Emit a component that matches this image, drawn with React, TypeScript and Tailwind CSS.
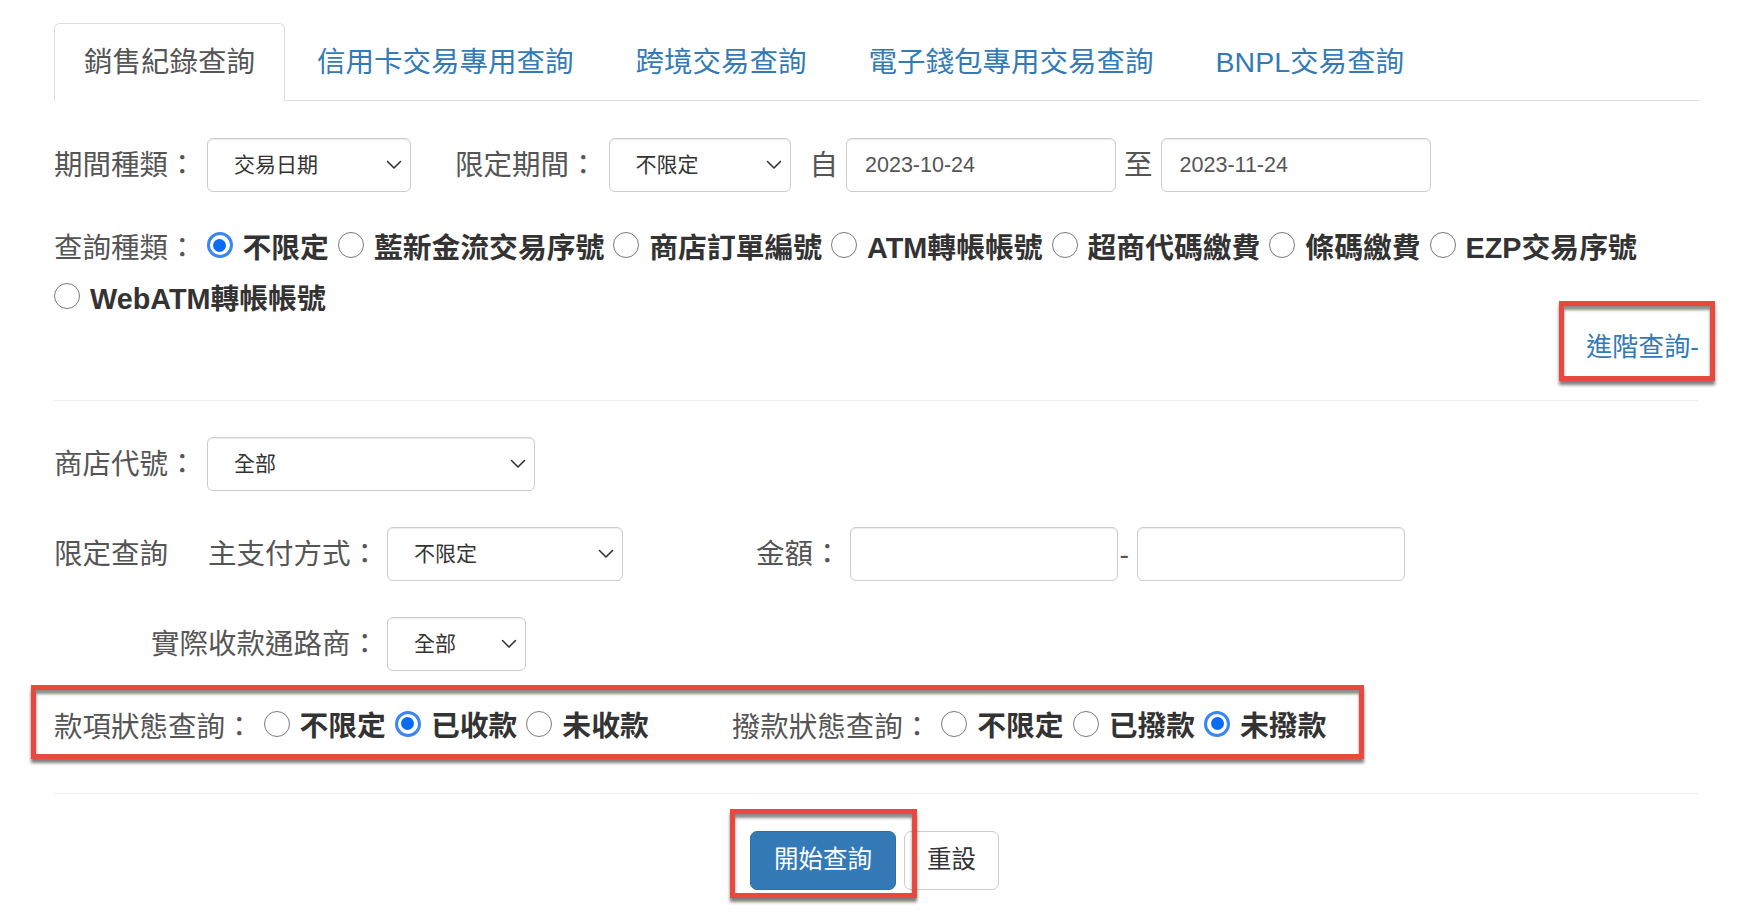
import React from "react";

const FONT = "font-['Liberation_Sans','Noto_Sans_CJK_TC',sans-serif]";

function Radio({ checked }: { checked?: boolean }) {
  if (checked) {
    return (
      <span className="mb-[7px] flex h-[26px] w-[26px] shrink-0 items-center justify-center rounded-full border-[3px] border-[#3b86f0] bg-white">
        <span className="h-[13px] w-[13px] rounded-full bg-[#0a6cf2]" />
      </span>
    );
  }
  return <span className="mb-[7px] h-[26px] w-[26px] shrink-0 rounded-full border border-[#7a7a7a] bg-white" />;
}

function RadioItem({ label, checked }: { label: string; checked?: boolean }) {
  return (
    <span className="flex h-[51px] items-center">
      <Radio checked={checked} />
      <span className="ml-[10px] text-[28.8px] font-bold text-[#333]">{label}</span>
    </span>
  );
}

function Chevron() {
  return (
    <svg width="16" height="10" viewBox="0 0 16 10" className="shrink-0">
      <polyline points="1.5,1.5 8,8 14.5,1.5" fill="none" stroke="#333" strokeWidth="1.6" strokeLinecap="round" strokeLinejoin="round" />
    </svg>
  );
}

function Select({ value, className }: { value: string; className: string }) {
  return (
    <div
      className={
        "flex h-[54px] shrink-0 items-center justify-between rounded-[6px] border border-[#ccc] bg-white pl-[26px] pr-[8px] text-[21px] text-[#333] shadow-[inset_0_1px_1px_rgba(0,0,0,0.075)] " +
        className
      }
    >
      <span>{value}</span>
      <Chevron />
    </div>
  );
}

function Input({ value, className }: { value?: string; className: string }) {
  return (
    <div
      className={
        "flex h-[54px] shrink-0 items-center rounded-[6px] border border-[#ccc] bg-white pl-[18px] text-[21.5px] text-[#555] shadow-[inset_0_1px_1px_rgba(0,0,0,0.075)] " +
        className
      }
    >
      {value}
    </div>
  );
}

const tabs = ["銷售紀錄查詢", "信用卡交易專用查詢", "跨境交易查詢", "電子錢包專用交易查詢", "BNPL交易查詢"];

export default function App() {
  return (
    <div className={"h-[914px] w-[1738px] overflow-hidden bg-white pl-[54px] pt-[23px] text-[28.5px] text-[#555] " + FONT}>
      <div className="w-[1645px]">
        {/* Tabs */}
        <ul className="flex border-b border-[#ddd]">
          {tabs.map((t, i) => (
            <li key={t} className="-mb-px mr-[2px]">
              {i === 0 ? (
                <span className="flex h-[78px] items-center rounded-t-[6px] border border-[#ddd] border-b-transparent bg-white px-[29px] text-[#555]">
                  {t}
                </span>
              ) : (
                <span className="flex h-[78px] items-center border border-transparent px-[29px] text-[#337ab7]">{t}</span>
              )}
            </li>
          ))}
        </ul>

        {/* Row 1 */}
        <div className="mt-[37px] flex h-[54px] items-center">
          <span className="w-[153px] shrink-0">期間種類：</span>
          <Select value="交易日期" className="w-[204px]" />
          <span className="ml-[44px] mr-[11px]">限定期間：</span>
          <Select value="不限定" className="w-[182px]" />
          <span className="ml-[19px] mr-[8px]">自</span>
          <Input value="2023-10-24" className="w-[270px]" />
          <span className="ml-[8px] mr-[8px]">至</span>
          <Input value="2023-11-24" className="w-[270px]" />
        </div>

        {/* Row 2 radios */}
        <div className="mt-[31px] flex flex-wrap gap-x-[9px]">
          <span className="mr-[1px] flex h-[51px] items-center">查詢種類：</span>
          <RadioItem label="不限定" checked />
          <RadioItem label="藍新金流交易序號" />
          <RadioItem label="商店訂單編號" />
          <RadioItem label="ATM轉帳帳號" />
          <RadioItem label="超商代碼繳費" />
          <RadioItem label="條碼繳費" />
          <RadioItem label="EZP交易序號" />
          <RadioItem label="WebATM轉帳帳號" />
        </div>

        {/* Advanced link */}
        <div className="flex justify-end">
          <span className="relative flex h-[44px] items-center text-[26px] text-[#337ab7]">
            進階查詢-
            <span className="pointer-events-none absolute -bottom-[12px] -left-[27px] -right-[16px] -top-[24px] border-[5px] border-[#e8493e] shadow-[0_4px_3px_rgba(0,0,0,0.5),inset_0_4px_3px_rgba(0,0,0,0.45)]" />
          </span>
        </div>

        <div className="mt-[31px] border-t border-[#eee]" />

        {/* 商店代號 */}
        <div className="mt-[36px] flex h-[54px] items-center">
          <span className="w-[153px] shrink-0">商店代號：</span>
          <Select value="全部" className="w-[328px]" />
        </div>

        {/* 限定查詢 */}
        <div className="mt-[36px] flex h-[54px] items-center">
          <span className="w-[153px] shrink-0">限定查詢</span>
          <span className="w-[172px] shrink-0 text-right">主支付方式：</span>
          <Select value="不限定" className="ml-[8px] w-[236px]" />
          <span className="ml-[133px] mr-[8px]">金額：</span>
          <Input className="w-[268px]" />
          <span className="ml-[2px] mr-[8px]">-</span>
          <Input className="w-[268px]" />
        </div>

        {/* 實際收款通路商 */}
        <div className="mt-[36px] flex h-[54px] items-center">
          <span className="w-[325px] shrink-0 text-right">實際收款通路商：</span>
          <Select value="全部" className="ml-[8px] w-[139px]" />
        </div>

        {/* status row */}
        <div className="relative mt-[29px] flex h-[54px] items-center">
          <span className="mr-[10px]">款項狀態查詢：</span>
          <div className="flex items-center gap-x-[9px]">
            <RadioItem label="不限定" />
            <RadioItem label="已收款" checked />
            <RadioItem label="未收款" />
          </div>
          <span className="ml-[83px] mr-[10px]">撥款狀態查詢：</span>
          <div className="flex items-center gap-x-[9px]">
            <RadioItem label="不限定" />
            <RadioItem label="已撥款" />
            <RadioItem label="未撥款" checked />
          </div>
          <span className="pointer-events-none absolute -bottom-[5px] -left-[23px] -top-[15px] right-[335px] border-[5px] border-[#e8493e] shadow-[0_4px_3px_rgba(0,0,0,0.5),inset_0_4px_3px_rgba(0,0,0,0.45)]" />
        </div>

        <div className="mt-[39px] border-t border-[#eee]" />

        {/* buttons */}
        <div className="mt-[37px] flex justify-center gap-[8px] pr-[4px]">
          <div className="relative">
            <button className="flex h-[59px] w-[146px] items-center justify-center rounded-[7px] border border-[#2e6da4] bg-[#337ab7] text-[24.5px] text-white">
              開始查詢
            </button>
            <span className="pointer-events-none absolute -bottom-[8px] -left-[20px] -right-[21px] -top-[22px] border-[5px] border-[#e8493e] shadow-[0_4px_3px_rgba(0,0,0,0.5),inset_0_4px_3px_rgba(0,0,0,0.45)]" />
          </div>
          <button className="flex h-[59px] w-[95px] items-center justify-center rounded-[7px] border border-[#ccc] bg-white text-[24.5px] text-[#333]">
            重設
          </button>
        </div>
      </div>
    </div>
  );
}
